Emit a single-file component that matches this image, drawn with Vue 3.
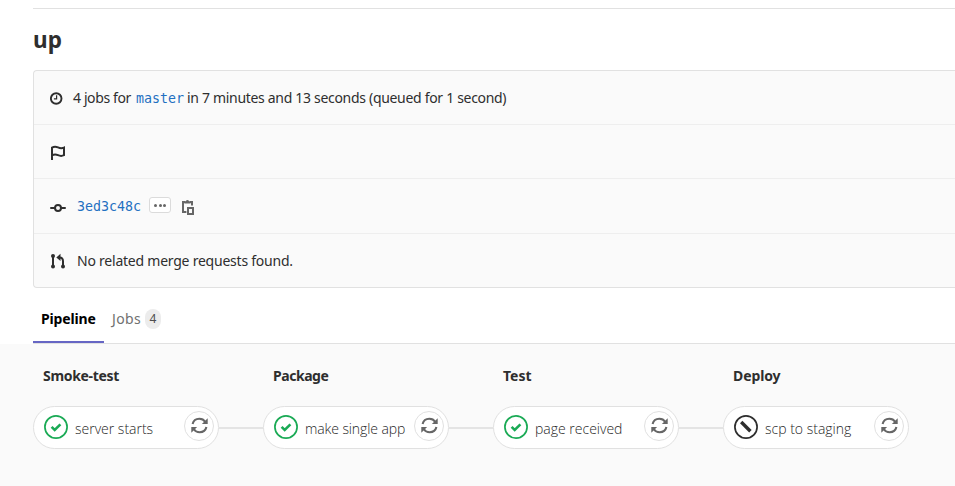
<script setup>
const stages = [
  { name: 'Smoke-test', job: 'server starts', status: 'success', k: 'a' },
  { name: 'Package', job: 'make single app', status: 'success', k: 'b' },
  { name: 'Test', job: 'page received', status: 'success', k: 'c' },
  { name: 'Deploy', job: 'scp to staging', status: 'manual', k: 'd' },
]
</script>

<template>
  <main class="page">
    <header class="title"><h1>up</h1></header>

    <section class="info">
      <div class="row first">
        <svg class="clock" viewBox="0 0 13 13"><circle cx="6.2" cy="6.5" r="5.3" /><path d="M6.6 3.3v3.6H3.9" class="hand" /></svg>
        <p><span class="t1">4 jobs for</span><a class="mono branch">master</a><span class="t2">in 7 minutes and 13 seconds (queued for 1 second)</span></p>
      </div>
      <div class="row flag">
        <svg class="icon" viewBox="0 0 16 16"><path d="M2 15V2.6C4 1.4 6 1.5 8 2.4s4 1 6 .2v7.6c-2 1-4 .9-6 0s-4-.9-6 .2" class="line" /></svg>
      </div>
      <div class="row">
        <svg class="icon commit" viewBox="0 0 16 16"><circle cx="8" cy="8" r="3" class="line" /><path d="M1 8h4M11 8h4" class="line round" /></svg>
        <a class="mono sha">3ed3c48c</a>
        <button class="more" aria-label="Toggle commit description"><i></i><i></i><i></i></button>
        <svg class="copy" viewBox="0 0 13 16"><path d="M4.4 13H1V3h2.2M8 3h2v3.4" /><path d="M2.4 2.2h1.5a1.6 1.6 0 0 1 3.1 0h1.5v2.4H2.4z" class="clip" /><path d="M6 9h5v6H6z" /></svg>
      </div>
      <div class="row last">
        <svg class="icon" viewBox="0 0 16 16"><path d="M3 3v11M13 13V8.2C13 5.6 12 4.5 9.5 4.5" class="line" /><g class="solid"><circle cx="3" cy="3" r="2" /><circle cx="3" cy="13.4" r="2" /><circle cx="13" cy="13.4" r="2" /><path d="M6.3 4.4 10.5.8V8z" /></g></svg>
        <span class="t3">No related merge requests found.</span>
      </div>
    </section>

    <nav class="tabs">
      <a class="tab active"><span class="pipe">Pipeline</span></a>
      <a class="tab"><span class="jobs">Jobs</span><b class="badge">4</b></a>
    </nav>

    <section class="graph">
      <div v-for="s in stages" :key="s.name" class="stage">
        <h2><span :class="'h-' + s.k">{{ s.name }}</span></h2>
        <div class="track">
          <div class="job">
            <svg class="status" :class="s.status" viewBox="0 0 24 24">
              <circle cx="12" cy="12" r="11.1" />
              <path v-if="s.status === 'success'" d="m7.6 11.9 3.1 3 5.7-5.5" class="check" />
              <path v-else d="m7.2 7 9.2 9.2" class="slash" />
            </svg>
            <span class="name" :class="'j-' + s.k">{{ s.job }}</span>
            <button class="retry" aria-label="Retry">
              <svg viewBox="0 0 17 17"><path d="M1.6 6.9C2.4 3.6 5.1 1.7 8.3 1.7c2.6 0 4.6 1.1 5.8 3M15.4 10.1c-.8 3.3-3.5 5.2-6.7 5.2-2.6 0-4.6-1.1-5.8-3" /><path d="M16.7 1.3v5.6h-5.8zM.3 15.7v-5.6h5.8z" class="head" /></svg>
            </button>
          </div>
          <div class="link"></div>
        </div>
      </div>
    </section>
  </main>
</template>

<style>
body { margin: 0; background: #fff; overflow: hidden; }
</style>

<style scoped>
* { box-sizing: border-box; }
.page { width: 955px; height: 486px; overflow: hidden; display: flex; flex-direction: column; padding-top: 8px; font-family: "Noto Sans", "Open Sans", sans-serif; font-size: 14px; color: #2e2e2e; white-space: nowrap; }
.title { flex: none; height: 62px; margin-left: 33px; border-top: 1px solid #e1e1e1; }
h1 { margin: 15px 0 0; font-size: 22.5px; line-height: 32px; font-weight: 700; }
.info { flex: none; height: 218px; margin-left: 33px; border: 1px solid #e1e1e1; border-right: 0; border-radius: 4px 0 0 4px; background: #fafafa; display: grid; grid-template-rows: 54px 54px 55px 53px; }
.row { display: flex; align-items: center; padding-left: 16px; border-bottom: 1px solid #eee; }
.row.last { border: 0; }
.row.flag { padding-top: 2px; }
.row p { margin: 2px 0 0; display: flex; align-items: baseline; line-height: 20px; }
svg { flex: none; display: block; fill: none; }
.clock { width: 13px; height: 13px; margin: 1px 10px 0 0; stroke: #2e2e2e; stroke-width: 1.9; }
.clock .hand { stroke-width: 1.2; }
.icon { width: 16px; height: 16px; margin-right: 11px; }
.commit { margin-top: 4px; }
.line { stroke: #2e2e2e; stroke-width: 2; }
.round { stroke-linecap: round; }
.solid { fill: #2e2e2e; }
.mono { font-family: "DejaVu Sans Mono", monospace; font-size: 13.3px; color: #1f70c1; }
.t1 { width: 60px; letter-spacing: -0.38px; }
.branch { width: 48px; margin: 0 3px; }
.t2 { letter-spacing: -0.31px; }
.t3 { letter-spacing: -0.23px; }
.more { width: 22px; height: 16px; padding: 0; margin: -2px 11px 0 8px; border: 1px solid #dbdbdb; border-radius: 3px; background: #fff; display: flex; align-items: center; justify-content: center; gap: 1.5px; }
.more i { width: 3px; height: 3px; border-radius: 50%; background: #666; }
.copy { width: 13px; height: 16px; margin-top: 1px; stroke: #666; stroke-width: 2; }
.copy .clip { fill: #666; stroke: none; }
.tabs { flex: none; height: 56px; margin-left: 33px; display: flex; border-bottom: 1px solid #e1e1e1; }
.tab { height: 56px; padding: 13px 8px 5px; display: flex; align-items: center; color: #707070; }
.tab.active { width: 71px; color: #000; font-weight: 700; border-bottom: 2px solid #6666c4; height: 55px; }
.tab:not(.active) { height: 53px; }
.pipe { letter-spacing: -0.15px; }
.jobs { letter-spacing: 0.35px; }
.badge { width: 16px; height: 20px; margin-left: 4px; border-radius: 10px; background: #ececec; color: #4e4e4e; font-size: 12px; font-weight: 400; line-height: 20px; text-align: center; }
.graph { flex: 1; background: #fafafa; padding-left: 33px; display: flex; }
.stage { flex: none; width: 230px; }
h2 { margin: 22px 0 20px 10px; font-size: 14px; line-height: 20px; font-weight: 700; }
.h-a { letter-spacing: -0.32px; }
.h-b { letter-spacing: -0.45px; }
.h-d { letter-spacing: -0.1px; }
.j-b { letter-spacing: -0.1px; }
.track { display: flex; align-items: center; }
.job { flex: none; width: 186px; height: 43px; padding: 0 4px 0 10px; border: 1px solid #e1e1e1; border-radius: 22px; background: #fff; display: flex; align-items: center; }
.link { flex: 1; height: 2px; background: #e4e4e4; }
.stage:last-child .link { display: none; }
.status { width: 24px; height: 24px; margin: -1px 7px 0 0; stroke-width: 1.7; }
.success { stroke: #1aaa55; }
.manual { stroke: #2e2e2e; }
.check { stroke-width: 2.6; }
.slash { stroke-width: 3.4; }
.name { font-family: "Open Sans", "Noto Sans", sans-serif; font-weight: 300; color: #1f1f1f; line-height: 20px; margin-top: 2px; }
.retry { flex: none; width: 30px; height: 30px; margin: -3px 0 0 auto; padding: 0; border: 1px solid #e1e1e1; border-radius: 50%; background: #fff; display: flex; align-items: center; justify-content: center; }
.retry svg { width: 17px; height: 17px; margin: -2px 0 0; stroke: #666; stroke-width: 2.1; }
.retry .head { fill: #666; stroke: none; }
</style>
